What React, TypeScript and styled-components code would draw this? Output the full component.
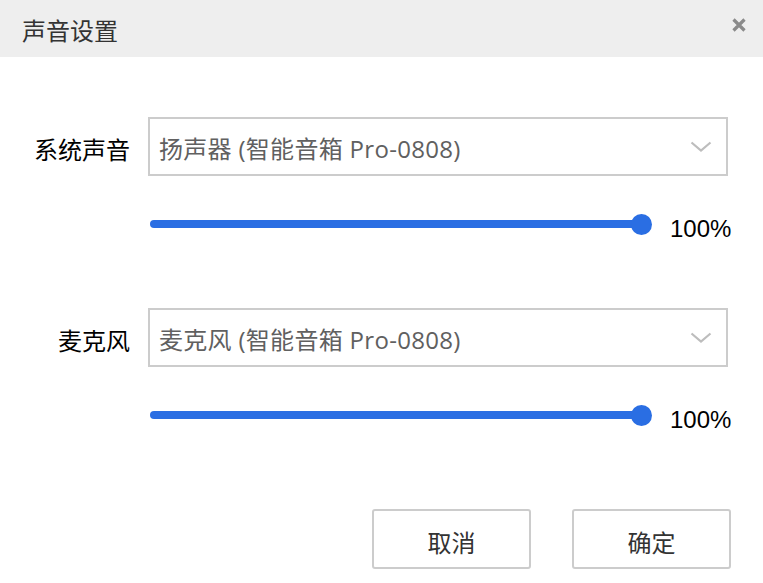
import React from 'react';
import styled, { createGlobalStyle } from 'styled-components';

const GlobalStyle = createGlobalStyle`
  html, body {
    margin: 0;
    padding: 0;
    background: #fff;
  }
  body {
    font-family: "Noto Sans CJK SC", "Noto Sans", sans-serif;
  }
`;

const Dialog = styled.div`
  width: 763px;
  height: 583px;
  background: #fff;
  display: flex;
  flex-direction: column;
`;

const Header = styled.div`
  height: 57px;
  background: #eeeeee;
  display: flex;
  align-items: center;
  justify-content: space-between;
  padding: 0 13px 0 22px;
  box-sizing: border-box;
`;

const Title = styled.div`
  font-size: 24px;
  color: #333;
  line-height: 1;
  margin-top: 2px;
`;

const CloseButton = styled.button`
  width: 22px;
  height: 22px;
  padding: 0;
  border: none;
  background: transparent;
  display: flex;
  align-items: center;
  justify-content: center;
  cursor: pointer;
  margin-top: -8px;
`;

const Body = styled.div`
  padding-top: 60px;
  display: flex;
  flex-direction: column;
`;

const Group = styled.div<{ $gap?: number }>`
  display: flex;
  flex-direction: column;
  margin-top: ${(p) => p.$gap ?? 0}px;
`;

const FieldRow = styled.div`
  display: flex;
  align-items: center;
  gap: 18px;
`;

const Label = styled.div`
  width: 130px;
  text-align: right;
  font-size: 24px;
  color: #000;
  line-height: 1;
  padding-top: 5px;
`;

const Select = styled.div`
  width: 580px;
  height: 59px;
  box-sizing: border-box;
  border: 2px solid #cccccc;
  display: flex;
  align-items: center;
  justify-content: space-between;
  padding: 4px 14px 0 9px;
  font-family: "Open Sans", "Noto Sans CJK SC", sans-serif;
  font-size: 24px;
  letter-spacing: 0.3px;
  color: #606060;
  line-height: 1;
`;

const Chevron = styled.svg`
  width: 22px;
  height: 12px;
  margin-top: -4px;
`;

const SliderRow = styled.div`
  display: flex;
  align-items: center;
  height: 24px;
  margin-top: 36px;
  padding-left: 150px;
`;

const Track = styled.div`
  position: relative;
  width: 492px;
  height: 8px;
  border-radius: 4px;
  background: #2a6ee3;
`;

const Thumb = styled.div`
  position: absolute;
  right: -10px;
  top: 50%;
  width: 21px;
  height: 21px;
  margin-top: -10.5px;
  border-radius: 50%;
  background: #2a6ee3;
`;

const Percent = styled.div`
  margin-left: 28px;
  font-family: "Liberation Sans", Arial, sans-serif;
  font-size: 24px;
  color: #000;
  line-height: 1;
  padding-top: 10px;
`;

const Footer = styled.div`
  display: flex;
  justify-content: flex-end;
  gap: 41px;
  padding-right: 32px;
  margin-top: 82px;
`;

const Button = styled.button`
  width: 159px;
  height: 60px;
  box-sizing: border-box;
  border: 2px solid #cccccc;
  border-radius: 3px;
  background: #fff;
  font-family: "Noto Sans CJK SC", "Noto Sans", sans-serif;
  font-size: 24px;
  color: #333;
  padding: 4px 0 0;
  cursor: pointer;
`;

const Field = ({ label, value, gap }: { label: string; value: string; gap?: number }) => (
  <Group $gap={gap}>
    <FieldRow>
      <Label>{label}</Label>
      <Select>
        <span>{value}</span>
        <Chevron viewBox="0 0 22 12">
          <path d="M1.5 1.5 L11 9.5 L20.5 1.5" fill="none" stroke="#bdbdbd" strokeWidth="2.2" />
        </Chevron>
      </Select>
    </FieldRow>
    <SliderRow>
      <Track>
        <Thumb />
      </Track>
      <Percent>100%</Percent>
    </SliderRow>
  </Group>
);

const App = () => {
  return (
    <Dialog>
      <GlobalStyle />
      <Header>
        <Title>声音设置</Title>
        <CloseButton aria-label="close">
          <svg width="16" height="16" viewBox="0 0 16 16">
            <path d="M2.5 2.5 L13.5 13.5 M13.5 2.5 L2.5 13.5" stroke="#8a8a8a" strokeWidth="3.2" />
          </svg>
        </CloseButton>
      </Header>
      <Body>
        <Field label="系统声音" value="扬声器 (智能音箱 Pro-0808)" />
        <Field label="麦克风" value="麦克风 (智能音箱 Pro-0808)" gap={72} />
        <Footer>
          <Button>取消</Button>
          <Button>确定</Button>
        </Footer>
      </Body>
    </Dialog>
  );
};

export default App;
